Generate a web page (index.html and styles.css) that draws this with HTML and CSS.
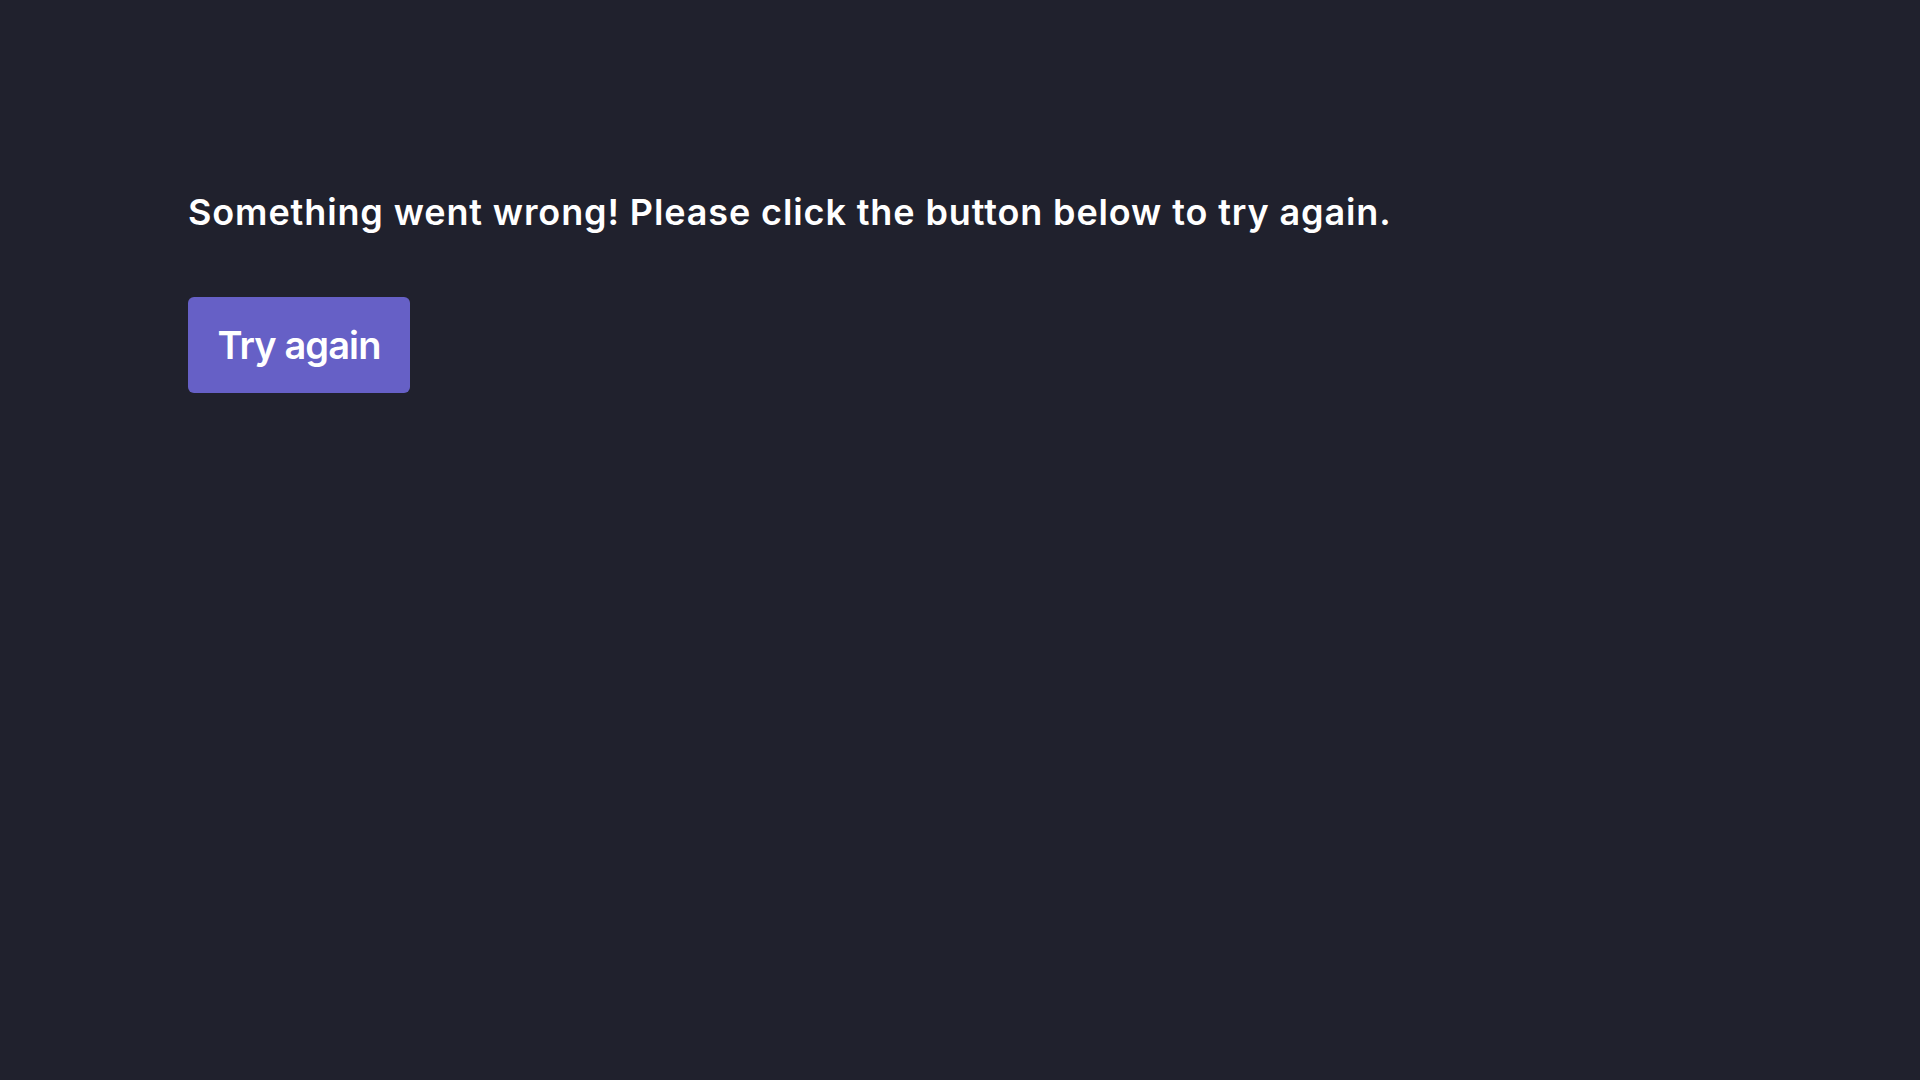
FILE: index.html
```html
<!DOCTYPE html>
<html lang="en">
<head>
<meta charset="utf-8">
<title>Error</title>
<link rel="stylesheet" href="styles.css">
</head>
<body>
<main class="page">
  <h2 class="message">Something went wrong! Please click the button below to try again.</h2>
  <button class="retry" type="button">Try again</button>
</main>
</body>
</html>
```
FILE: styles.css
```css
html, body {
  margin: 0;
  height: 100%;
  background: #20212d;
}
body {
  font-family: Inter, "Noto Sans", sans-serif;
  color: #ffffff;
}
.page {
  padding: 186px 0 0 188px;
  display: flex;
  flex-direction: column;
  align-items: flex-start;
}
.message {
  margin: 0;
  font-size: 36px;
  font-weight: 600;
  line-height: 52px;
  letter-spacing: 0.88px;
}
.retry {
  margin-top: 59px;
  width: 222px;
  height: 96px;
  border: none;
  border-radius: 6px;
  background: #6660c6;
  color: #ffffff;
  font-family: Inter, "Noto Sans", sans-serif;
  font-size: 38px;
  font-weight: 600;
  letter-spacing: -0.9px;
  padding: 0;
}
```
